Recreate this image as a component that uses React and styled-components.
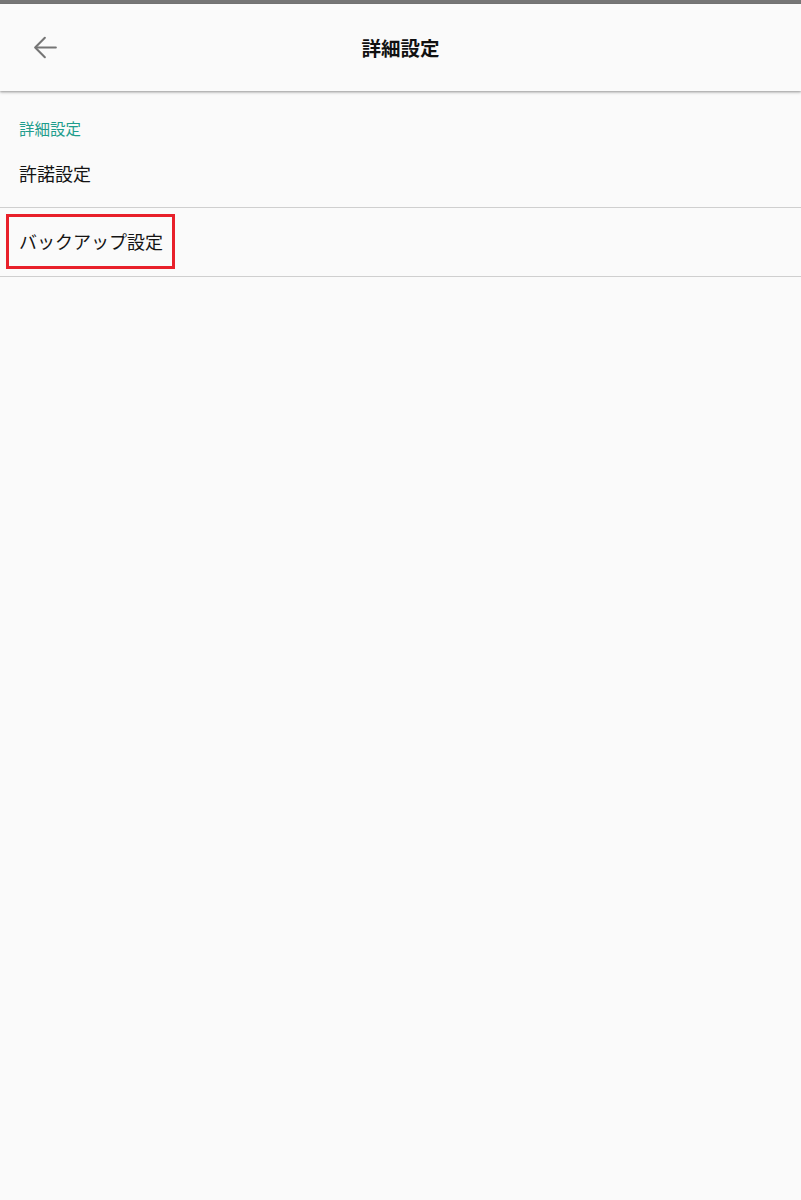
import styled, { createGlobalStyle } from "styled-components";

const GlobalStyle = createGlobalStyle`
    html, body {
        margin: 0;
        padding: 0;
        background: #fafafa;
        font-family: "Noto Sans CJK JP", "Noto Sans", Roboto, sans-serif;
    }
`;

const Page = styled.div`
    width: 801px;
    min-height: 1200px;
    background: #fafafa;
`;

const StatusStrip = styled.div`
    height: 4px;
    background: #767676;
`;

const Header = styled.header`
    position: relative;
    z-index: 1;
    height: 87px;
    display: grid;
    grid-template-columns: 90px 1fr 90px;
    align-items: center;
    background: #fafafa;
    box-shadow: 0 1px 2px rgba(0, 0, 0, 0.28), 0 2px 3px rgba(0, 0, 0, 0.12);
`;

const BackButton = styled.button`
    justify-self: start;
    margin-left: 29px;
    width: 32px;
    height: 32px;
    padding: 0;
    border: none;
    background: none;
    display: flex;
    align-items: center;
    justify-content: center;
    cursor: pointer;
`;

const Title = styled.h1`
    margin: 0;
    text-align: center;
    font-size: 19.5px;
    font-weight: 700;
    color: #111;
`;

const CategoryTitle = styled.div`
    padding: 27px 19px 0;
    line-height: 20px;
    font-size: 15.5px;
    color: #1f9d8d;
`;

const Item = styled.div`
    height: ${(p) => p.$height}px;
    display: flex;
    align-items: center;
    padding-left: ${(p) => (p.$marked ? 6 : 19)}px;
    border-bottom: 1px solid #cfcfcf;
    font-size: 18px;
    color: #141414;
`;

const Highlight = styled.span`
    height: 55px;
    box-sizing: border-box;
    display: inline-flex;
    align-items: center;
    padding: 0 9px 1px 10px;
    border: 3px solid #e8202a;
    margin-top: -1px;
`;

const BackIcon = () => (
    <svg width="31" height="31" viewBox="0 0 24 24" fill="none" stroke="#757575" strokeWidth="1.6" strokeLinecap="round" strokeLinejoin="round">
        <path d="M20 12H4.5" />
        <path d="M11.5 4.5 4 12l7.5 7.5" />
    </svg>
);

export default function App() {
    return (
        <Page>
            <GlobalStyle />
            <StatusStrip />
            <Header>
                <BackButton aria-label="戻る">
                    <BackIcon />
                </BackButton>
                <Title>詳細設定</Title>
                <div />
            </Header>
            <CategoryTitle>詳細設定</CategoryTitle>
            <Item $height={69}>許諾設定</Item>
            <Item $height={68} $marked>
                <Highlight>バックアップ設定</Highlight>
            </Item>
        </Page>
    );
}
